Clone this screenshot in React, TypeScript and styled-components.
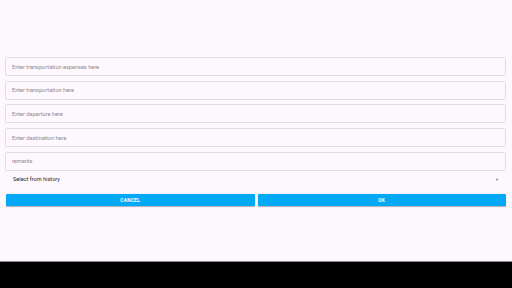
import React from "react";
import styled, { createGlobalStyle } from "styled-components";

/* ------------------------------------------------------------------ */
/* global                                                             */
/* ------------------------------------------------------------------ */
const Global = createGlobalStyle`
  html, body {
    margin: 0;
    padding: 0;
    background: #fdf7fe;
    font-family: Roboto, "Noto Sans", sans-serif;
  }
`;

const fields = [
  "Enter transportation expenses here",
  "Enter transportation here",
  "Enter departure here",
  "Enter destination here",
  "remarks",
];

export default function App() {
  return (
    <>
      <Global />
      <Screen>
        <Content>
          <Form>
            {fields.map((f) => (
              <Input key={f} placeholder={f} />
            ))}
            <HistoryRow>
              <span>Select from history</span>
              <Caret>▼</Caret>
            </HistoryRow>
            <Actions>
              <ActionButton>CANCEL</ActionButton>
              <ActionButton>OK</ActionButton>
            </Actions>
          </Form>
        </Content>
        <NavBar />
      </Screen>
    </>
  );
}

/* ------------------------------------------------------------------ */
/* styles                                                             */
/* ------------------------------------------------------------------ */
const Screen = styled.div`
  width: 512px;
  height: 288px;
  display: flex;
  flex-direction: column;
  overflow: hidden;
`;

const Content = styled.div`
  flex: 1;
  padding-top: 57px;
`;

const Form = styled.div`
  display: flex;
  flex-direction: column;
  gap: 4.7px;
  padding: 0 6px 0 5px;
`;

const Input = styled.input`
  display: block;
  box-sizing: border-box;
  width: 100%;
  height: 19px;
  margin: 0;
  padding: 0 6px;
  border: 1px solid #e2dce2;
  border-radius: 1.5px;
  background: transparent;
  font-family: Roboto, "Noto Sans", sans-serif;
  font-size: 5.6px;
  color: #333;
  outline: none;

  &::placeholder {
    color: #8e898e;
  }
`;

const HistoryRow = styled.div`
  display: flex;
  align-items: center;
  justify-content: space-between;
  height: 8px;
  padding: 0 7px 0 8px;
  font-size: 5.6px;
  color: #2a262a;
`;

const Caret = styled.span`
  font-size: 4px;
  color: #777;
`;

const Actions = styled.div`
  display: grid;
  grid-template-columns: 1fr 1fr;
  gap: 3px;
  margin-top: 6px;
  padding-left: 1px;
`;

const ActionButton = styled.button`
  height: 12px;
  padding: 0;
  border: none;
  border-radius: 1px;
  background: #03a9f4;
  color: #fff;
  font-family: Roboto, "Noto Sans", sans-serif;
  font-weight: 700;
  font-size: 4.8px;
  letter-spacing: 0.3px;
  box-shadow: 0 0.5px 1px rgba(0, 0, 0, 0.3);
`;

const NavBar = styled.div`
  height: 26px;
  background: #000;
  border-top: 1px solid #8a8a8a;
`;
